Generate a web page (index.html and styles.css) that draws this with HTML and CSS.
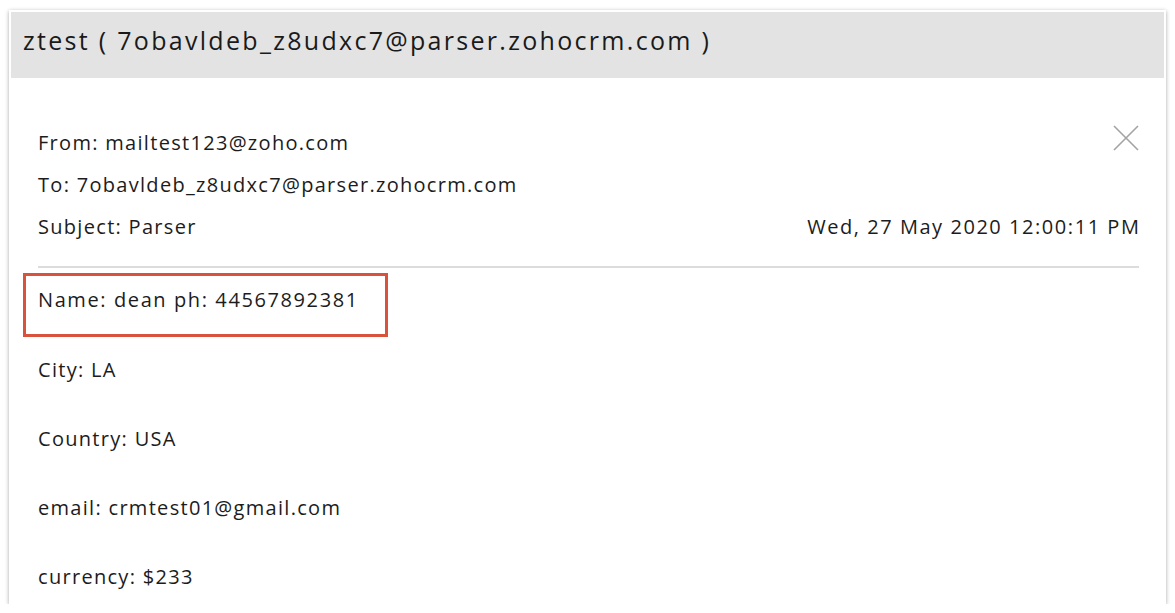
FILE: index.html
```html
<!DOCTYPE html>
<html lang="en">
<head>
    <meta charset="UTF-8">
    <meta name="viewport" content="width=device-width, initial-scale=1.0">
    <title>ztest - Parser mail</title>
    <link rel="stylesheet" href="styles.css">
</head>
<body>
    <div class="mail-card">
        <div class="mail-title">ztest ( 7obavldeb_z8udxc7@parser.zohocrm.com )</div>
        <div class="mail-body">
            <div class="meta-row">
                <span>From: mailtest123@zoho.com</span>
                <button class="close-btn" title="Close">
                    <svg width="26" height="26" viewBox="0 0 26 26">
                        <path d="M1 1 L25 25 M25 1 L1 25" stroke="#a3a3a3" stroke-width="1.6" fill="none"/>
                    </svg>
                </button>
            </div>
            <div class="meta-row">
                <span>To: 7obavldeb_z8udxc7@parser.zohocrm.com</span>
            </div>
            <div class="meta-row">
                <span>Subject: Parser</span>
                <span class="mail-date">Wed, 27 May 2020 12:00:11 PM</span>
            </div>
            <div class="divider"></div>
            <div class="fields">
                <div class="field highlight">Name: dean ph: 44567892381</div>
                <div class="field">City: LA</div>
                <div class="field">Country: USA</div>
                <div class="field">email: crmtest01@gmail.com</div>
                <div class="field">currency: $233</div>
            </div>
        </div>
    </div>
</body>
</html>
```

FILE: styles.css
```css
body {
    margin: 0;
    background: #fff;
    font-family: 'Open Sans', 'Lato', sans-serif;
    color: #1c1c1c;
}

.mail-card {
    margin: 10px 0 0 9px;
    width: 1157px;
    height: 594px;
    box-sizing: border-box;
    padding: 2px;
    background: #fff;
    box-shadow: 0 1px 4px rgba(0, 0, 0, 0.35);
    overflow: hidden;
}

.mail-title {
    background: #e3e3e3;
    height: 66px;
    box-sizing: border-box;
    padding: 8px 12px 18px;
    font-size: 25px;
    line-height: 40px;
    letter-spacing: 2.3px;
    color: #1a1a1a;
    white-space: nowrap;
}

.mail-body {
    padding: 44px 25px 0 27px;
    font-size: 20px;
    letter-spacing: 1.3px;
}

.meta-row {
    display: flex;
    justify-content: space-between;
    align-items: flex-start;
    line-height: 42px;
}

.mail-date {
    margin-right: -1.5px;
    letter-spacing: 1.55px;
}

.close-btn {
    margin-top: 3px;
    padding: 0;
    border: none;
    background: none;
    cursor: pointer;
    width: 26px;
    height: 26px;
}

.close-btn svg {
    display: block;
}

.divider {
    margin-top: 18px;
    height: 2px;
    background: #dcdcdc;
}

.fields {
    margin-top: 5px;
}

.field {
    line-height: 42px;
    margin-bottom: 27px;
}

.field.highlight {
    display: inline-block;
    margin: 0 0 12px -15px;
    padding: 3px 26px 13px 12px;
    border: 3px solid #d9533c;
    letter-spacing: 1.6px;
}
```
